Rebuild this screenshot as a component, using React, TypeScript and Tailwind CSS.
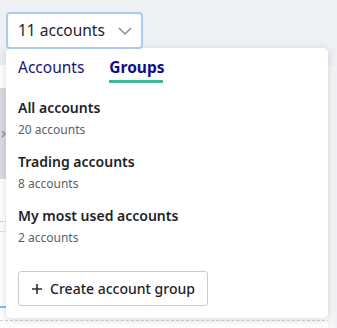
import React from "react";

export default function App() {
  const groups = [
    { name: "All accounts", count: "20 accounts" },
    { name: "Trading accounts", count: "8 accounts" },
    { name: "My most used accounts", count: "2 accounts" },
  ];
  return (
    <div
      className="relative w-[337px] h-[328px] overflow-hidden bg-[#eff0f3]"
      style={{ fontFamily: '"Noto Sans", "Open Sans", sans-serif' }}
    >
      {/* background content */}
      <div className="absolute left-0 top-[65px] w-[335px] h-[263px] bg-white border-r border-[#e3e5ea]">
        <div className="mt-[23px] w-[7px] h-[91px] bg-[#d9dce1] flex items-center justify-end pr-[1px]">
          <svg width="5" height="8" viewBox="0 0 5 8">
            <path d="M1 1 L4 4 L1 7" stroke="#8a8f99" strokeWidth="1.5" fill="none" />
          </svg>
        </div>
        <div className="mt-[42px] w-[335px] border-t border-dashed border-[#c9ccd2]" />
        <div className="mt-[9px] w-[335px] border-t border-dashed border-[#d8dade]" />
        <div className="mt-[74px] w-[20px] h-[2px] bg-[#8fb8ee]" />
        <div className="mt-[12px] w-[335px] border-t border-dashed border-[#d0d3d8]" />
      </div>
      <div className="absolute left-[328px] top-[65px] w-[7px] h-[263px] bg-[#f5f6f8]" />

      {/* trigger */}
      <div className="absolute left-[6px] top-[12px] w-[137px] h-[37px] rounded-[4px] border-2 border-[#a9cbf3] bg-white flex items-center pl-[10px] pr-[9px] justify-between z-20">
        <span className="text-[15.5px] text-[#23252b]">11 accounts</span>
        <svg width="14" height="8" viewBox="0 0 14 8">
          <path d="M1 1 L7 7 L13 1" stroke="#8b8f97" strokeWidth="1.5" fill="none" />
        </svg>
      </div>

      {/* popover */}
      <div className="absolute left-[6px] top-[48px] w-[322px] h-[270px] bg-white rounded-[5px] shadow-[0_2px_8px_rgba(30,40,60,0.18)] z-10 px-[12px]">
        <div className="flex gap-[25px] pt-[7px] h-[36px]">
          <div className="text-[15.5px] leading-[24px] text-[#14147a]">Accounts</div>
          <div className="flex flex-col items-start">
            <div className="text-[15.5px] leading-[24px] font-bold text-[#0b0b8f]">Groups</div>
            <div className="mt-[1px] w-[54px] h-[3px] bg-[#3dba98]" />
          </div>
        </div>
        <div className="mt-[14px] flex flex-col gap-[14px]">
          {groups.map((g) => (
            <div key={g.name} className="flex flex-col gap-[4px]">
              <div className="text-[14px] leading-[20px] font-semibold text-[#1d1f2a]">{g.name}</div>
              <div className="text-[12px] leading-[16px] text-[#5a5f6b]">{g.count}</div>
            </div>
          ))}
        </div>
        <button className="mt-[25px] h-[35px] w-[190px] rounded-[3px] border border-[#c9ccd3] bg-white flex items-center justify-center gap-[7px] text-[14px] font-medium text-[#1d1f2a]">
          <svg width="12" height="12" viewBox="0 0 12 12">
            <path d="M6 1 V11 M1 6 H11" stroke="#2a2c35" strokeWidth="1.6" />
          </svg>
          <span>Create account group</span>
        </button>
      </div>
    </div>
  );
}
